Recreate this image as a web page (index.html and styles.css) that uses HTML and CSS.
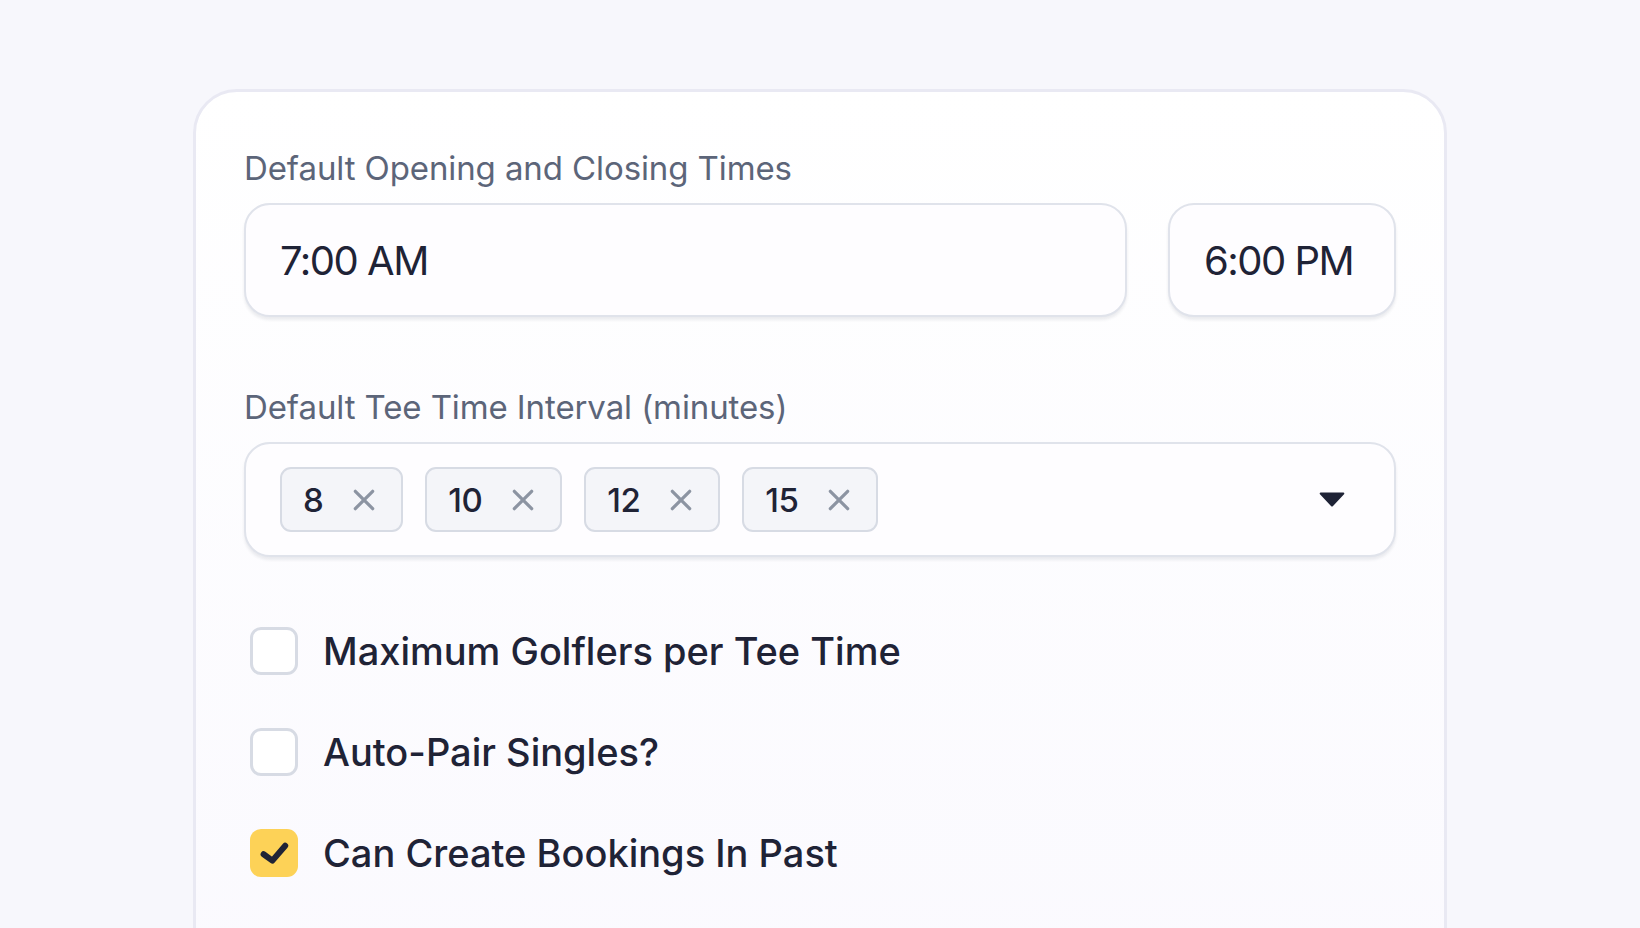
FILE: index.html
```html
<!DOCTYPE html>
<html lang="en">
<head>
  <meta charset="UTF-8">
  <title>Tee Sheet Settings</title>
  <link rel="stylesheet" href="styles.css">
</head>
<body>
  <div class="card">
    <div class="field">
      <label class="field-label">Default Opening and Closing Times</label>
      <div class="time-row">
        <div class="input input-open">7:00 AM</div>
        <div class="input input-close">6:00 PM</div>
      </div>
    </div>

    <div class="field">
      <label class="field-label">Default Tee Time Interval (minutes)</label>
      <div class="select">
        <div class="chips">
          <span class="chip">8 <svg class="chip-x" viewBox="0 0 24 24"><path d="M4 4L20 20M20 4L4 20"/></svg></span>
          <span class="chip">10 <svg class="chip-x" viewBox="0 0 24 24"><path d="M4 4L20 20M20 4L4 20"/></svg></span>
          <span class="chip">12 <svg class="chip-x" viewBox="0 0 24 24"><path d="M4 4L20 20M20 4L4 20"/></svg></span>
          <span class="chip">15 <svg class="chip-x" viewBox="0 0 24 24"><path d="M4 4L20 20M20 4L4 20"/></svg></span>
        </div>
        <svg class="caret" viewBox="0 0 24 14"><path d="M1.5 1.5H22.5L12 12.5Z"/></svg>
      </div>
    </div>

    <div class="options">
      <div class="option">
        <span class="checkbox"></span>
        <span class="option-label">Maximum Golflers per Tee Time</span>
      </div>
      <div class="option">
        <span class="checkbox"></span>
        <span class="option-label">Auto-Pair Singles?</span>
      </div>
      <div class="option">
        <span class="checkbox checked">
          <svg viewBox="0 0 24 24"><path d="M6.8 12.6L11.2 15.8L17.6 8.4"/></svg>
        </span>
        <span class="option-label">Can Create Bookings In Past</span>
      </div>
      <div class="option">
        <span class="checkbox"></span>
      </div>
    </div>
  </div>
</body>
</html>
```

FILE: styles.css
```css
html, body {
  height: 100%;
}
body {
  margin: 0;
  padding-top: 89px;
  box-sizing: border-box;
  background: #f7f7fc;
  font-family: Inter, "Noto Sans", sans-serif;
  color: #1f2336;
  overflow: hidden;
}
.card {
  width: 1254px;
  margin: 0 auto;
  box-sizing: border-box;
  padding: 56px 48px 80px;
  background: linear-gradient(#ffffff, #faf9fe);
  border: 3px solid #e9e9f3;
  border-radius: 44px;
}
.field + .field {
  margin-top: 70px;
}
.field-label {
  display: block;
  font-size: 33px;
  line-height: 40px;
  color: #5c6579;
  letter-spacing: -0.1px;
  margin-bottom: 15px;
}
.time-row {
  display: flex;
  gap: 41px;
}
.input {
  height: 114px;
  box-sizing: border-box;
  display: flex;
  align-items: center;
  padding: 0 34px;
  border: 2px solid #e0e3eb;
  border-radius: 26px;
  background: #fefdff;
  box-shadow: 0 3px 3px rgba(40, 50, 80, 0.09);
  font-size: 40px;
  letter-spacing: -1.5px;
  white-space: nowrap;
}
.input-open {
  flex: 1;
}
.input-close {
  width: 228px;
}
.select {
  height: 115px;
  box-sizing: border-box;
  display: flex;
  align-items: center;
  justify-content: space-between;
  padding: 0 49px 0 34px;
  border: 2px solid #e0e3eb;
  border-radius: 26px;
  background: #fefdff;
  box-shadow: 0 3px 3px rgba(40, 50, 80, 0.09);
}
.chips {
  display: flex;
  gap: 22px;
}
.chip {
  height: 65px;
  box-sizing: border-box;
  display: flex;
  align-items: center;
  gap: 28px;
  padding: 0 24px 0 21px;
  background: #f4f5f9;
  border: 2px solid #d7dbe4;
  border-radius: 11px;
  font-size: 33px;
  font-weight: 500;
  letter-spacing: -0.5px;
}
.chip-x {
  width: 26px;
  height: 26px;
  fill: none;
  stroke: #8c94a2;
  stroke-width: 3;
  stroke-linecap: round;
}
.caret {
  width: 26px;
  height: 15px;
  fill: #1f2336;
  stroke: #1f2336;
  stroke-width: 2;
  stroke-linejoin: round;
}
.options {
  margin-top: 70px;
  display: flex;
  flex-direction: column;
  gap: 53px;
}
.option {
  display: flex;
  align-items: center;
  gap: 25px;
  margin-left: 6px;
}
.checkbox {
  width: 48px;
  height: 48px;
  box-sizing: border-box;
  flex-shrink: 0;
  border: 3px solid #d7dbe4;
  border-radius: 11px;
  background: #ffffff;
  display: flex;
  align-items: center;
  justify-content: center;
}
.checkbox.checked {
  border: none;
  background: #fdd257;
}
.checkbox svg {
  width: 48px;
  height: 48px;
  fill: none;
  stroke: #1f2336;
  stroke-width: 3;
  stroke-linecap: round;
  stroke-linejoin: round;
}
.option-label {
  font-size: 38px;
  line-height: 48px;
  font-weight: 500;
  letter-spacing: 0;
}
```
